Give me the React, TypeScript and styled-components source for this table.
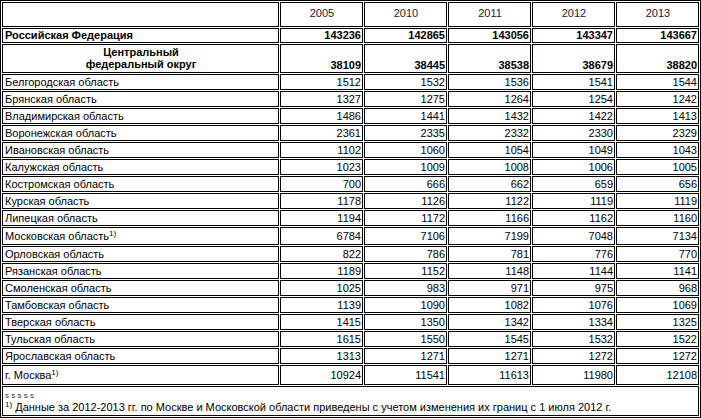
import React from 'react';
import styled, { createGlobalStyle } from 'styled-components';

const GlobalStyle = createGlobalStyle`
  html, body {
    margin: 0;
    padding: 0;
    background: #fff;
  }
  body {
    font-family: "Liberation Sans", Arial, sans-serif;
    font-size: 11px;
    color: #000;
  }
`;

const Table = styled.table`
    width: 701px;
    border: 1px solid #000;
    border-collapse: separate;
    border-spacing: 1px;
    table-layout: fixed;
    font-family: "Liberation Sans", Arial, sans-serif;
    font-size: 11px;
`;

const Cell = styled.td<{
    $align?: 'left' | 'right' | 'center';
    $valign?: 'top' | 'middle' | 'bottom';
    $bold?: boolean;
    $lh?: number;
}>`
    border: 1px solid #000;
    padding: 0 1px 0 2px;
    text-align: ${({ $align }) => $align || 'left'};
    vertical-align: ${({ $valign }) => $valign || 'middle'};
    font-weight: ${({ $bold }) => ($bold ? 'bold' : 'normal')};
    line-height: ${({ $lh }) => $lh || 14}px;
    white-space: nowrap;
`;

const HeadCell = styled(Cell)`
    height: 20px;
    padding-top: 3px;
    text-align: center;
    vertical-align: top;
    color: #222;
`;

const DistrictName = styled(Cell)`
    text-align: center;
    line-height: 12px;
    padding-top: 1px;
    padding-bottom: 2px;
    white-space: normal;
`;

const Sup = styled.sup`
    font-size: 8px;
    line-height: 0;
    vertical-align: 4px;
`;

const NoteCell = styled.td`
    border: 1px solid #000;
    padding: 4px 2px 2px 2px;
    line-height: 12px;
`;

const Dots = styled.div`
    font-size: 8px;
    line-height: 10px;
    color: #333;
`;

type Row = { name: string; values: number[]; note?: boolean; lh?: number };

const years = [2005, 2010, 2011, 2012, 2013];

const regions: Row[] = [
    { name: 'Белгородская область', values: [1512, 1532, 1536, 1541, 1544] },
    { name: 'Брянская область', values: [1327, 1275, 1264, 1254, 1242] },
    { name: 'Владимирская область', values: [1486, 1441, 1432, 1422, 1413] },
    { name: 'Воронежская область', values: [2361, 2335, 2332, 2330, 2329] },
    { name: 'Ивановская область', values: [1102, 1060, 1054, 1049, 1043] },
    { name: 'Калужская область', values: [1023, 1009, 1008, 1006, 1005] },
    { name: 'Костромская область', values: [700, 666, 662, 659, 656] },
    { name: 'Курская область', values: [1178, 1126, 1122, 1119, 1119] },
    { name: 'Липецкая область', values: [1194, 1172, 1166, 1162, 1160] },
    { name: 'Московская область', values: [6784, 7106, 7199, 7048, 7134], note: true, lh: 16 },
    { name: 'Орловская область', values: [822, 786, 781, 776, 770] },
    { name: 'Рязанская область', values: [1189, 1152, 1148, 1144, 1141] },
    { name: 'Смоленская область', values: [1025, 983, 971, 975, 968] },
    { name: 'Тамбовская область', values: [1139, 1090, 1082, 1076, 1069] },
    { name: 'Тверская область', values: [1415, 1350, 1342, 1334, 1325] },
    { name: 'Тульская область', values: [1615, 1550, 1545, 1532, 1522] },
    { name: 'Ярославская область', values: [1313, 1271, 1271, 1272, 1272] },
    { name: 'г. Москва', values: [10924, 11541, 11613, 11980, 12108], note: true, lh: 18 },
];

export default function App() {
    return (
        <>
            <GlobalStyle />
            <Table>
                <colgroup>
                    <col style={{ width: 277 }} />
                    {years.map((y) => (
                        <col key={y} style={{ width: 83 }} />
                    ))}
                </colgroup>
                <tbody>
                    <tr>
                        <HeadCell>&nbsp;</HeadCell>
                        {years.map((y) => (
                            <HeadCell key={y}>{y}</HeadCell>
                        ))}
                    </tr>
                    <tr>
                        <Cell $bold $lh={13}>
                            Российская Федерация
                        </Cell>
                        {[143236, 142865, 143056, 143347, 143667].map((v, i) => (
                            <Cell key={i} $bold $align="right" $lh={13}>
                                {v}
                            </Cell>
                        ))}
                    </tr>
                    <tr>
                        <DistrictName $bold>
                            Центральный
                            <br />
                            федеральный округ
                        </DistrictName>
                        {[38109, 38445, 38538, 38679, 38820].map((v, i) => (
                            <Cell key={i} $bold $align="right" $valign="bottom">
                                {v}
                            </Cell>
                        ))}
                    </tr>
                    {regions.map((r) => (
                        <tr key={r.name}>
                            <Cell $lh={r.lh}>
                                {r.name}
                                {r.note && <Sup>1)</Sup>}
                            </Cell>
                            {r.values.map((v, i) => (
                                <Cell key={i} $align="right" $lh={r.lh}>
                                    {v}
                                </Cell>
                            ))}
                        </tr>
                    ))}
                    <tr>
                        <NoteCell colSpan={6}>
                            <Dots>s s s s s</Dots>
                            <Sup>1)</Sup> Данные за 2012-2013 гг. по Москве и Московской области приведены с
                            учетом изменения их границ с 1 июля 2012 г.
                        </NoteCell>
                    </tr>
                </tbody>
            </Table>
        </>
    );
}
